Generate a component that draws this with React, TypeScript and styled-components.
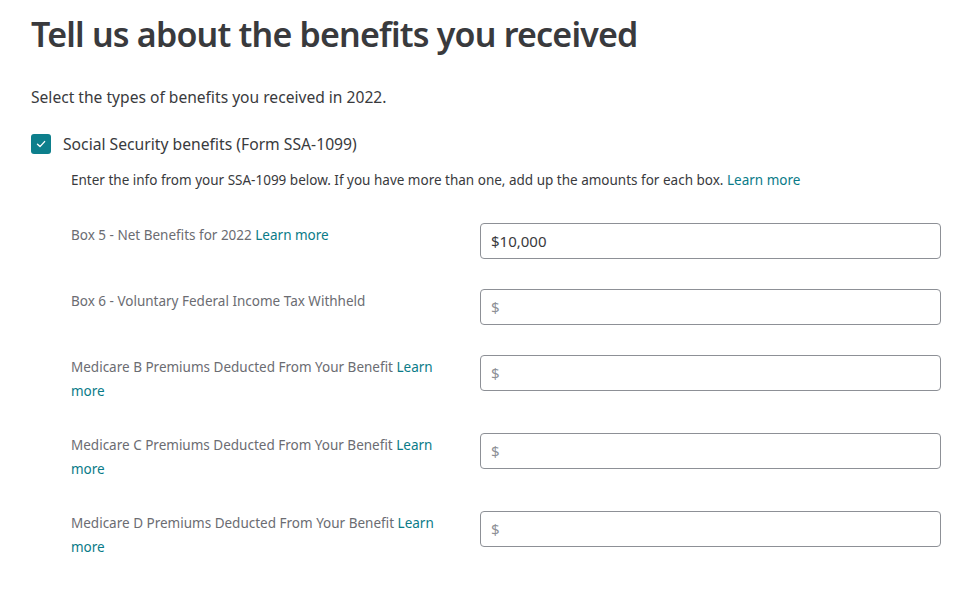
import React from "react";
import styled, { createGlobalStyle } from "styled-components";

const GlobalStyle = createGlobalStyle`
  html, body {
    margin: 0;
    background: #ffffff;
  }
  body {
    font-family: "Noto Sans", "Open Sans", Arial, sans-serif;
    color: #393a3d;
  }
`;

const Page = styled.div`
  padding: 12px 30px 40px 31px;
`;

const Title = styled.h1`
  margin: 0;
  font-size: 34px;
  font-weight: 600;
  line-height: 44px;
  color: #393a3d;
  letter-spacing: -0.8px;
`;

const Intro = styled.p`
  margin: 30px 0 0;
  font-size: 15.6px;
  line-height: 22px;
  color: #393a3d;
`;

const CheckRow = styled.label`
  display: flex;
  align-items: center;
  gap: 12px;
  margin-top: 25px;
  font-size: 15.7px;
  line-height: 22px;
  color: #393a3d;
`;

const Box = styled.span`
  width: 20px;
  height: 20px;
  border-radius: 3px;
  background: #0d7f8c;
  display: flex;
  align-items: center;
  justify-content: center;
  flex-shrink: 0;
`;

const Section = styled.div`
  padding-left: 40px;
`;

const Note = styled.p`
  margin: 15px 0 0;
  font-size: 13.5px;
  line-height: 20px;
  color: #393a3d;
`;

const Link = styled.a`
  color: #0a7b88;
  text-decoration: none;
  cursor: pointer;
`;

const Fields = styled.div`
  display: flex;
  flex-direction: column;
  gap: 30px;
  margin-top: 33px;
`;

const FieldRow = styled.div`
  display: grid;
  grid-template-columns: 380px 461px;
  column-gap: 29px;
  align-items: start;
`;

const FieldLabel = styled.div`
  font-size: 13.5px;
  line-height: 24px;
  color: #6b6c72;
`;

const Input = styled.input`
  box-sizing: border-box;
  width: 100%;
  height: 36px;
  border: 1px solid #8d9096;
  border-radius: 4px;
  padding: 0 10px;
  font-family: inherit;
  font-size: 15px;
  color: #393a3d;
  background: #fff;
  outline: none;

  &::placeholder {
    color: #8d9096;
  }
`;

type Field = { label: string; learn?: boolean; value?: string };

const fields: Field[] = [
  { label: "Box 5 - Net Benefits for 2022", learn: true, value: "$10,000" },
  { label: "Box 6 - Voluntary Federal Income Tax Withheld" },
  { label: "Medicare B Premiums Deducted From Your Benefit", learn: true },
  { label: "Medicare C Premiums Deducted From Your Benefit", learn: true },
  { label: "Medicare D Premiums Deducted From Your Benefit", learn: true },
];

const Check = () => (
  <svg width="12" height="12" viewBox="0 0 12 12" fill="none">
    <path
      d="M2.5 6.2 L5 8.6 L9.6 3.6"
      stroke="#fff"
      strokeWidth="1.4"
      strokeLinecap="round"
      strokeLinejoin="round"
    />
  </svg>
);

export default function App() {
  return (
    <Page>
      <GlobalStyle />
      <Title>Tell us about the benefits you received</Title>
      <Intro>Select the types of benefits you received in 2022.</Intro>
      <CheckRow>
        <Box>
          <Check />
        </Box>
        Social Security benefits (Form SSA-1099)
      </CheckRow>
      <Section>
        <Note>
          Enter the info from your SSA-1099 below. If you have more than one, add up the
          amounts for each box. <Link>Learn more</Link>
        </Note>
        <Fields>
          {fields.map((f) => (
            <FieldRow key={f.label}>
              <FieldLabel>
                {f.label}
                {f.learn && (
                  <>
                    {" "}
                    <Link>Learn more</Link>
                  </>
                )}
              </FieldLabel>
              <Input defaultValue={f.value} placeholder="$" />
            </FieldRow>
          ))}
        </Fields>
      </Section>
    </Page>
  );
}
